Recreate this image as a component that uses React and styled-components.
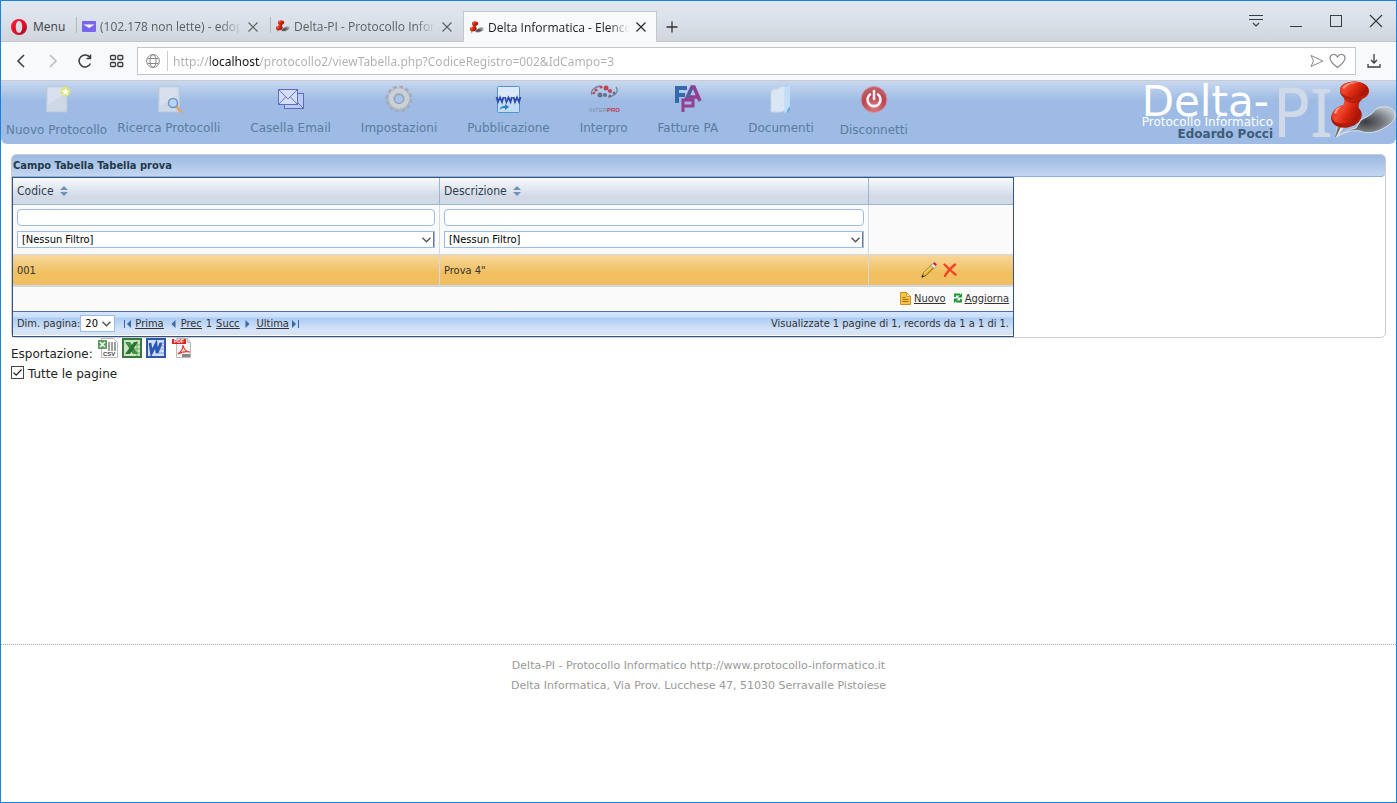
import { useState } from "react";
import styled, { createGlobalStyle, css } from "styled-components";

const verdana = `Verdana, "DejaVu Sans", sans-serif`;
const tahoma = `Tahoma, "DejaVu Sans Condensed", "DejaVu Sans", sans-serif`;
const segoe = `"Segoe UI", "Open Sans", sans-serif`;

const GlobalStyle = createGlobalStyle`
  * {
    box-sizing: border-box;
  }

  body {
    margin: 0;
    background: #fff;
    color: #333;
    font-family: ${verdana};
    font-size: 12px;
  }

  button {
    padding: 0;
    border: none;
    background: none;
    font: inherit;
    color: inherit;
    cursor: pointer;
  }

  svg {
    display: block;
    flex-shrink: 0;
  }
`;

const Window = styled.div`
  display: flex;
  flex-direction: column;
  min-height: 100vh;
  border: 1px solid #1a82d8;
`;

/* browser chrome */

const TabBar = styled.div`
  display: flex;
  height: 41px;
  padding-top: 10px;
  background: linear-gradient(#e1e7ef, #dbe2eb 40%, #d0d5dc);
  box-shadow: inset 0 -1px #c4c6c9;
  font-family: ${segoe};
  font-size: 12px;
  color: #5b5f63;
`;

const MenuButton = styled.button`
  display: flex;
  align-items: center;
  gap: 6px;
  width: 74px;
  padding-left: 10px;
  color: #3c4248;
`;

const Tab = styled.div`
  display: flex;
  align-items: center;
  gap: 4px;
  width: 194px;
  padding: 0 10px 0 6px;
  border: 1px solid transparent;
  background: linear-gradient(#b5b9be, #b5b9be) left 5px / 1px 16px no-repeat;

  ${(props) =>
    props.$active &&
    css`
      border-color: #c4c6c9;
      border-bottom: none;
      background: #f8f9fb;
      color: #222;
    `}
`;

const TabTitle = styled.span`
  flex: 1;
  overflow: hidden;
  white-space: nowrap;
  mask-image: linear-gradient(90deg, #000 84%, transparent 98%);
`;

const NewTab = styled.button`
  padding: 0 9px;
  color: #333;
`;

const WindowButtons = styled.div`
  display: flex;
  align-items: flex-start;
  gap: 24px;
  margin-left: auto;
  padding-right: 12px;
  color: #3a3d40;
`;

const AddressBar = styled.div`
  display: flex;
  align-items: center;
  gap: 16px;
  height: 39px;
  padding: 0 14px 0 12px;
  border-bottom: 1px solid #c9cbce;
  background: #f8f9fb;
  color: #3a3d40;
`;

const AddressField = styled.label`
  display: flex;
  align-items: center;
  flex: 1;
  gap: 4px;
  height: 28px;
  padding: 0 9px 0 8px;
  margin: 0 -6px 0 -4px;
  border: 1px solid #c4c6c9;
  background: #fff;
  color: #888;
`;

/* the host part of the address is darker than the rest */
const AddressInput = styled.input`
  flex: 1;
  height: 20px;
  margin-left: 3px;
  padding: 1px 0 0 5px;
  border: none;
  border-left: 1px solid #ccc;
  outline: none;
  font-family: "Noto Sans", sans-serif;
  font-size: 12px;
  color: #aeaeae;
  background: linear-gradient(90deg, #aeaeae 42px, #111 42px 92px, #aeaeae 92px);
  background-clip: text;
  -webkit-text-fill-color: transparent;
`;

/* application header */

const Header = styled.header`
  display: flex;
  justify-content: space-between;
  height: 63px;
  border-radius: 0 0 6px 6px;
  background: linear-gradient(#c8d8ef, #9dbbe4 20px);
`;

const Toolbar = styled.nav`
  display: flex;
  gap: 30px;
  padding: 4px 0 0 5px;
`;

const Tool = styled.a`
  display: flex;
  flex-direction: column;
  align-items: center;
  gap: ${(props) => (props.$low ? "9px" : "7px")};
  margin-right: -${(props) => props.$tight || 0}px;
  line-height: 16px;
  text-decoration: none;
  white-space: nowrap;
  color: #5c7b9e;
`;

const Brand = styled.div`
  display: flex;
`;

const BrandText = styled.div`
  display: flex;
  flex-direction: column;
  padding-top: 6px;
  line-height: 12px;
  color: #fff;
`;

const BrandName = styled.span`
  font-size: 42px;
  line-height: 29px;
`;

const UserName = styled.strong`
  text-align: right;
  color: #3f5c78;
`;

const BrandMark = styled.span`
  width: 58px;
  font-family: "DejaVu Sans Condensed", sans-serif;
  font-size: 68px;
  line-height: 60px;
  white-space: nowrap;
  color: #d0d9e8;
`;

const Serifed = styled.span`
  font-family: "Noto Sans", sans-serif;
`;

/* content */

const Main = styled.main`
  flex: 1;
  padding: 10px;
`;

const Panel = styled.section`
  border: 1px solid #ccc;
  border-radius: 5px;
`;

const PanelTitle = styled.h1`
  margin: 0;
  padding-left: 1px;
  border-bottom: 1px solid #8fb0dc;
  border-radius: 4px 4px 4px 0;
  background: linear-gradient(#9bb9e2, #c3d6f1);
  font-family: ${tahoma};
  font-size: 11px;
  line-height: 21px;
  color: #1f3a4a;
`;

const Grid = styled.table`
  width: 1002px;
  max-width: 100%;
  border: 1px solid #34547f;
  border-spacing: 0;
  table-layout: fixed;
  background: #fafafa;
  font-family: ${tahoma};
  font-size: 11px;
  color: #333;
`;

const Col = styled.col`
  width: ${(props) => props.$width}px;
`;

const HeadCell = styled.th`
  height: 27px;
  padding: 0 4px;
  border-bottom: 1px solid #9ab4d1;
  border-right: ${(props) => (props.$last ? "none" : "1px solid #9ab4d1")};
  background: linear-gradient(#f8fbfc, #d3dae7 70%);
  text-align: left;
  font-size: 12px;
  font-weight: normal;
  color: #2b3f4e;
`;

const SortButton = styled.button`
  display: flex;
  align-items: center;
  gap: 6px;
`;

const FilterCell = styled.td`
  height: 50px;
  padding: 0 4px 2px;
  border-bottom: 1px solid #d0d7e5;
  border-right: ${(props) => (props.$last ? "none" : "1px solid #d0d7e5")};
`;

const FilterInput = styled.input`
  display: block;
  width: 100%;
  height: 17px;
  margin-bottom: 5px;
  border: 1px solid #9dbbe4;
  border-radius: 4px;
  background: #fff;
  font: inherit;
`;

const SelectBox = styled.span`
  position: relative;
  display: block;
  flex: none;
  width: ${(props) => props.$width || "100%"};

  svg {
    position: absolute;
    top: 50%;
    right: 4px;
    transform: translateY(-50%);
    pointer-events: none;
    color: #555;
  }
`;

const Select = styled.select`
  display: block;
  appearance: none;
  width: 100%;
  height: 17px;
  padding: 0 4px;
  border: 1px solid #9dbbe4;
  border-radius: 0;
  box-shadow: ${(props) => (props.$plain ? "none" : "inset -1px 0 #777")};
  background: #fff;
  font: inherit;
  color: #000;
`;

const DataCell = styled.td`
  height: 32px;
  padding: 0 4px;
  border-bottom: 2px solid #d0d7e5;
  border-right: ${(props) => (props.$last ? "none" : "1px solid #d0d7e5")};
  background: linear-gradient(#f8d89e, #f0bf5f 60%);
`;

const RowActions = styled.div`
  display: flex;
  justify-content: center;
  gap: 6px;
  padding-right: 4px;
`;

const FootCell = styled.td`
  height: 24px;
  padding: 0 4px 2px;
`;

const GridActions = styled.div`
  display: flex;
  justify-content: flex-end;
  align-items: center;
  gap: 8px;
`;

const GridLink = styled.a`
  display: flex;
  align-items: center;
  gap: 3px;
  color: #333;
`;

const PagerCell = styled.td`
  height: 25px;
  padding: 0 4px;
  border-top: 1px solid #4a72a8;
  border-bottom: 1px solid #fff;
  background: linear-gradient(#d6e5fc, #cbdffb 5px, #acccf4 6px, #d6e4f7 18px);
`;

const Pager = styled.div`
  display: flex;
  align-items: center;
`;

const PagerLinks = styled.div`
  display: flex;
  align-items: center;
  gap: 4px;
  margin-left: 9px;

  svg {
    color: #3b69a8;
  }
`;

const PagerLink = styled.a`
  display: flex;
  align-items: center;
  gap: ${(props) => props.$gap || 2}px;
  margin-right: ${(props) => (props.$spaced ? "3px" : "0")};
  color: #333;

  span {
    text-decoration: underline;
  }
`;

const Records = styled.span`
  margin-left: auto;
`;

const ExportRow = styled.div`
  display: flex;
  align-items: flex-start;
  gap: 4px;
  height: 27px;
  color: #222;
`;

const ExportLabel = styled.span`
  margin-right: 1px;
  line-height: 32px;
`;

const AllPages = styled.label`
  display: flex;
  align-items: center;
  gap: 4px;
  line-height: 18px;
  color: #222;
`;

const Checkbox = styled.input`
  appearance: none;
  width: 13px;
  height: 13px;
  margin: 0 0 3px;
  border: 1px solid #444;
  background: #fff;

  &:checked {
    background: #fff
      url("data:image/svg+xml,%3Csvg xmlns='http://www.w3.org/2000/svg' viewBox='0 0 11 11' fill='none' stroke='%23222' stroke-width='1.2'%3E%3Cpath d='M1.5 5.5l2.7 2.7L9.5 2.5'/%3E%3C/svg%3E");
  }
`;

const Footer = styled.footer`
  padding: 11px 0 106px;
  border-top: 1px dotted #aaa;
  text-align: center;
  font-size: 11px;
  line-height: 20px;
  color: #999;

  p {
    margin: 0;
  }
`;

/* icons */

const CloseIcon = () => (
  <svg width="10" height="10" viewBox="0 0 10 10" stroke="currentColor" strokeWidth="1.1">
    <path d="M.5 .5l9 9M9.5 .5l-9 9" />
  </svg>
);

const ChevronIcon = () => (
  <svg width="9" height="6" viewBox="0 0 9 6" fill="none" stroke="currentColor" strokeWidth="1.4">
    <path d="M.5 .8l4 4 4-4" />
  </svg>
);

const OperaIcon = () => (
  <svg width="16" height="16" viewBox="0 0 16 16">
    <defs>
      <linearGradient id="opera" x1="0" y1="0" x2="1" y2="1">
        <stop offset="0" stopColor="#ff1b2d" />
        <stop offset=".6" stopColor="#e01028" />
        <stop offset="1" stopColor="#98001b" />
      </linearGradient>
    </defs>
    <path
      fill="url(#opera)"
      fillRule="evenodd"
      d="M8 0a8 8 0 1 0 0 16A8 8 0 0 0 8 0zm0 2.1c2 0 3.200 2.600 3.200 5.900S10 13.900 8 13.900 4.800 11.300 4.800 8 6 2.100 8 2.100z"
    />
  </svg>
);

const MailIcon = () => (
  <svg width="14" height="11" viewBox="0 0 14 11">
    <rect width="14" height="11" rx="1" fill="#7765f0" />
    <path d="M1.500 3.500h11L7 7z" fill="#fff" />
  </svg>
);

const PinIcon = ({ width = 14, height = 13 }) => (
  <svg width={width} height={height} viewBox="0 0 65 57">
    <defs>
      <linearGradient id="pinRed" x1="0" y1="0" x2="1" y2=".5">
        <stop offset="0" stopColor="#d62812" />
        <stop offset=".35" stopColor="#ee4a30" />
        <stop offset=".6" stopColor="#dd2a12" />
        <stop offset="1" stopColor="#a81405" />
      </linearGradient>
      <radialGradient id="pinShadow" cx=".5" cy=".5" r=".55">
        <stop offset="0" stopColor="#3c3d40" />
        <stop offset=".45" stopColor="#6a6d72" />
        <stop offset="1" stopColor="#bac1ca" />
      </radialGradient>
    </defs>
    <path
      d="M5 56c7-4 14-8 20-9l5-8c5-3 11-5 14-10 4-4 15-5 19 1 4 6-2 13-10 17-8 5-17 6-24 3-6-1-13 0-24 6z"
      fill="url(#pinShadow)"
      stroke="#dfe2e6"
      strokeWidth="1"
    />
    <path d="M6 45l7 1-7 10H4z" fill="#e9eaec" />
    <path d="M7 45L4 56h1l5-10" fill="#777" />
    <ellipse cx="15.500" cy="35.500" rx="15.500" ry="11" fill="#b01a08" transform="rotate(-12 15.500 35.500)" />
    <ellipse cx="15" cy="33" rx="14.500" ry="9.500" fill="url(#pinRed)" transform="rotate(-12 15 33)" />
    <path d="M12 13c3 6 1 10-2 16 3 5 13 6 18 0-1-5 0-8 4-14z" fill="url(#pinRed)" />
    <path d="M12 15c4 5 13 7 20 1l-1 3c-5 5-14 4-18-1z" fill="#981606" opacity=".6" />
    <ellipse cx="23.500" cy="10" rx="14.500" ry="9.500" fill="#bb1d0a" />
    <ellipse cx="23" cy="8.500" rx="14" ry="8" fill="url(#pinRed)" />
    <path d="M11 7c3-5 11-7 16-5-6 0-11 2-14 6z" fill="#ffc9b8" opacity=".6" />
    <path d="M3 32c1-4 4-6 7-6-3 2-4 4-5 7z" fill="#ffc9b8" opacity=".7" />
  </svg>
);

const NewDocIcon = () => (
  <svg width="28" height="28" viewBox="0 0 28 28">
    <path d="M3.500 1.500h20.500v25.500h-20.500z" fill="#ccd8e6" stroke="#b8c8da" />
    <path d="M5 2.500h14v8L5 20z" fill="#dbe4ee" opacity=".8" />
    <circle cx="22.500" cy="6.500" r="5" fill="#dfe672" opacity=".85" />
    <path d="M22.500 3l1 2.500 2.500.2-1.900 1.700.7 2.600-2.300-1.500-2.300 1.500.7-2.600-1.900-1.700 2.500-.2z" fill="#fff" />
  </svg>
);

const SearchDocIcon = () => (
  <svg width="28" height="28" viewBox="0 0 28 28">
    <path d="M3.500 1.500h21v25.500h-21z" fill="#ccd8e6" stroke="#b8c8da" />
    <path d="M5 2.500h17v8L5 21z" fill="#dbe4ee" opacity=".7" />
    <path d="M21 21l5 6" stroke="#d9a878" strokeWidth="3" strokeLinecap="round" />
    <circle cx="18" cy="18" r="4.500" fill="#b7d4f2" stroke="#6f95c4" strokeWidth="1.500" />
  </svg>
);

const EmailIcon = () => (
  <svg width="28" height="28" viewBox="0 0 28 28" stroke="#5f6cc0">
    <rect x="7.500" y="8.500" width="19" height="15" fill="#bccaf0" />
    <path d="M26 23l-5-5" strokeWidth=".9" />
    <rect x="1.500" y="4.500" width="19" height="15" fill="#d3ddf6" />
    <path d="M2 5l9 9 9-9M2 19l6.500-7M20 19l-6.500-7" fill="none" strokeWidth=".9" />
  </svg>
);

const GearIcon = () => (
  <svg width="28" height="28" viewBox="0 0 28 28">
    <circle cx="14" cy="14" r="12" fill="none" stroke="#a3acb6" strokeWidth="3" strokeDasharray="3.800 2.483" />
    <circle cx="14" cy="14" r="7.500" fill="none" stroke="#adb6bf" strokeWidth="7.500" />
    <circle cx="14" cy="13.500" r="8" fill="none" stroke="#ccd1d7" strokeWidth="4.500" />
    <circle cx="14" cy="14" r="4.500" fill="#a8c4e9" stroke="#8e9dae" />
  </svg>
);

const WwwIcon = () => (
  <svg width="28" height="28" viewBox="0 0 28 28">
    <rect x="3.500" y="1.500" width="22" height="26" rx="1" fill="#dbe9f8" stroke="#4f93cf" />
    <path d="M4 12h21v15H4z" fill="#c3dcf5" />
    <path
      d="M2.500 12l1.500 5 2-4.500 2 4.500 1.500-5M11 12l1.500 5 2-4.500 2 4.500 1.500-5M19.500 12l1.500 5 2-4.500 2 4.500 1.500-5"
      fill="none"
      stroke="#2d49ac"
      strokeWidth="1.800"
    />
    <path d="M6 25c0-3 2-4 5-4v-2l4 3-4 3v-2c-2 0-4 0-5 2z" fill="#2b7fc0" />
  </svg>
);

const InterproText = styled.text`
  font-family: "Liberation Sans", sans-serif;
  font-size: 6px;
`;

const InterproIcon = () => (
  <svg width="32" height="28" viewBox="-2 0 32 28">
    <path d="M2 10c-2-4 2-8 8-9M26 2c3 4 0 9-8 10" fill="none" stroke="#7c8493" strokeWidth="1.300" />
    <g fill="#bd4657">
      <circle cx="16" cy="3" r="2.500" />
      <circle cx="11" cy="2" r="1.500" />
      <circle cx="20" cy="6" r="2" />
      <circle cx="6" cy="5" r="1.600" />
      <circle cx="4" cy="8" r="1.300" />
    </g>
    <g fill="#66728a">
      <circle cx="10" cy="10" r="2.500" />
      <circle cx="15" cy="10" r="2" />
      <circle cx="20" cy="11" r="1.500" />
      <circle cx="24" cy="8" r="1.500" />
    </g>
    <InterproText x="-1" y="27" fill="#8391a8">
      INTER<tspan fill="#c03850" fontWeight="bold">PRO</tspan>
    </InterproText>
  </svg>
);

const FatturaIcon = () => (
  <svg width="28" height="28" viewBox="0 0 28 28" fill="none" strokeWidth="4">
    <path d="M3 18V3h10M3 10h8" stroke="#3669ab" />
    <path d="M9 27V15h10v6h-9" stroke="#953e91" strokeWidth="3" />
    <path d="M12 15l6-13h2l6 14M15 12h9" stroke="#953e91" strokeWidth="3.500" />
    <path d="M13 13l5-10" stroke="#3669ab" strokeWidth="2.500" />
  </svg>
);

const FolderIcon = () => (
  <svg width="28" height="28" viewBox="0 0 28 28">
    <path d="M12 1l11-1v24l-6 4z" fill="#a9d2f2" />
    <path d="M4 7l2-3h5l4-3 3 1v23l-4 2H4z" fill="#dae6f3" stroke="#c5d7e9" />
    <path d="M18 2l5-2v24l-5 4z" fill="#c1def6" />
    <path d="M20 25l3-4v4l-3 3z" fill="#68acdf" />
  </svg>
);

const PowerIcon = () => (
  <svg width="28" height="28" viewBox="0 0 28 28">
    <defs>
      <radialGradient id="power" cx=".5" cy=".8" r=".75">
        <stop offset="0" stopColor="#dd7a80" />
        <stop offset=".6" stopColor="#bb4550" />
        <stop offset="1" stopColor="#c0606a" />
      </radialGradient>
    </defs>
    <circle cx="14" cy="14.500" r="13" fill="url(#power)" stroke="#cf9aaa" />
    <path d="M10 9.500a6.500 6.500 0 1 0 8 0M14 6v8" fill="none" stroke="#f4f4fa" strokeWidth="2.600" strokeLinecap="round" />
  </svg>
);

const SortIcon = () => (
  <svg width="8" height="10" viewBox="0 0 8 10" fill="#6c93bd">
    <path d="M4 0l4 4H0zM4 10l4-4H0z" />
  </svg>
);

const PencilIcon = () => (
  <svg width="16" height="16" viewBox="0 0 16 16">
    <path d="M1 15l1.500-4L11 2.500l2.500 2.500L5 13.500z" fill="#e9b92e" stroke="#59430c" strokeWidth=".8" />
    <path d="M3 11.500L11.500 3" stroke="#fff2a8" />
    <path d="M10 3.500l2-2 3 3-2 2z" fill="#eee" stroke="#777" strokeWidth=".6" />
    <path d="M12.500 1.500l1-1 2 2-1 1z" fill="#d8213c" stroke="#d8213c" />
    <path d="M.5 15.500l.8-2.600 1.800 1.800z" fill="#111" />
  </svg>
);

const DeleteIcon = () => (
  <svg width="14" height="14" viewBox="0 0 14 14" stroke="#f04628" strokeWidth="2.400">
    <path d="M1.500 1.500c3 3 7 7 11 10M12 1.500C8 5 4 9 2 13" fill="none" strokeLinecap="round" />
  </svg>
);

const NoteIcon = () => (
  <svg width="11" height="13" viewBox="0 0 11 13">
    <path d="M.5 .5h6l4 4v8H.5z" fill="#f6c64a" stroke="#c8901d" />
    <path d="M6.500 .5v4h4z" fill="#fff0b9" stroke="#c8901d" strokeWidth=".8" />
    <path d="M2.500 5.500h3M2.500 7.500h6M2.500 9.500h6" stroke="#9c6c10" />
  </svg>
);

const RefreshIcon = () => (
  <svg width="8" height="10" viewBox="0 0 8 10" fill="none" stroke="#14962e" strokeWidth="1.800">
    <path d="M1 4V1.500h5M2 8.500h5V6" />
    <path d="M8 0v4.500H3.500zM0 10V5.500h4.500z" fill="#14962e" stroke="none" />
  </svg>
);

const FirstIcon = () => (
  <svg width="8" height="8" viewBox="0 0 8 8" fill="currentColor">
    <path d="M0 0h1v8H0zM7 0v8L3 4z" />
  </svg>
);

const PrevIcon = () => (
  <svg width="5" height="8" viewBox="0 0 5 8" fill="currentColor">
    <path d="M4.500 0v8L.5 4z" />
  </svg>
);

const NextIcon = () => (
  <svg width="5" height="8" viewBox="0 0 5 8" fill="currentColor">
    <path d="M.5 0v8l4-4z" />
  </svg>
);

const LastIcon = () => (
  <svg width="8" height="8" viewBox="0 0 8 8" fill="currentColor">
    <path d="M1 0v8l4-4zM7 0h1v8H7z" />
  </svg>
);

const CsvText = styled.text`
  font-family: "Liberation Sans", sans-serif;
  font-size: 6px;
  font-weight: bold;
`;

const CsvIcon = () => (
  <svg width="20" height="20" viewBox="0 0 20 20">
    <path d="M3.500 .5h12l4 4v15h-16z" fill="#fff" stroke="#bbb" />
    <path d="M11 4v9M14 4v9M17 4v9" stroke="#777" strokeWidth="1.400" />
    <rect y="2" width="9" height="9" fill="#5e9d61" />
    <path d="M2 4l5 5M7 4L2 9" stroke="#fff" strokeWidth="1.500" />
    <path d="M4 13h15v6H4z" fill="#fff" />
    <CsvText x="5" y="18" fill="#444">
      CSV
    </CsvText>
  </svg>
);

const ExcelIcon = () => (
  <svg width="20" height="20" viewBox="0 0 20 20">
    <rect x="1" y="1" width="18" height="18" fill="#cfe5c8" stroke="#387b39" strokeWidth="2" />
    <path d="M12 7h6M12 11h6M12 15h6M15 3v15" stroke="#6faa68" />
    <path d="M3 4h5l8 12h-5z" fill="#3f9142" />
    <path d="M12 4h4L8 16H3z" fill="#2b7330" />
  </svg>
);

const WordIcon = () => (
  <svg width="20" height="20" viewBox="0 0 20 20">
    <rect x="1" y="1" width="18" height="18" fill="#cfdcf6" stroke="#3156a5" strokeWidth="2" />
    <path d="M14 5h4M14 8h4M14 11h4M13 15h5" stroke="#7f9bd5" />
    <path d="M4 5l1.500 10L10 6l1 9 4-10" fill="none" stroke="#2b57b4" strokeWidth="2.800" />
  </svg>
);

const PdfText = styled(CsvText)`
  font-size: 5px;
`;

const PdfIcon = () => (
  <svg width="22" height="20" viewBox="-2 0 22 20">
    <path d="M4.500 .5h11l3 4v15h-14z" fill="#f3f3f3" stroke="#bbb" />
    <path d="M15.500 .5v4h3" fill="#ddd" stroke="#bbb" />
    <path d="M0 1h14v5H0z" fill="#df2020" />
    <path d="M6 16c3-2 5-6 5-9 1 5 3 7 7 7-4-1-8 0-12 2z" fill="none" stroke="#df3a30" strokeWidth="1.200" />
    <path d="M10 16h8v3h-8z" fill="#888" />
    <PdfText x="2" y="5" fill="#fff">
      PDF
    </PdfText>
  </svg>
);

const tabs = [
  { title: "(102.178 non lette) - edopocci", icon: <MailIcon /> },
  { title: "Delta-PI - Protocollo Informatico", icon: <PinIcon /> },
  { title: "Delta Informatica - Elenco Tabelle", icon: <PinIcon />, active: true },
];

const tools = [
  { label: "Nuovo Protocollo", icon: <NewDocIcon />, low: true, tight: 20 },
  { label: "Ricerca Protocolli", icon: <SearchDocIcon /> },
  { label: "Casella Email", icon: <EmailIcon /> },
  { label: "Impostazioni", icon: <GearIcon /> },
  { label: "Pubblicazione", icon: <WwwIcon /> },
  { label: "Interpro", icon: <InterproIcon /> },
  { label: "Fatture PA", icon: <FatturaIcon /> },
  { label: "Documenti", icon: <FolderIcon />, tight: 4 },
  { label: "Disconnetti", icon: <PowerIcon />, low: true },
];

const columns = ["Codice", "Descrizione"];

const Browser = () => (
  <>
    <TabBar>
      <MenuButton>
        <OperaIcon />
        Menu
      </MenuButton>
      {tabs.map((tab) => (
        <Tab key={tab.title} $active={tab.active}>
          {tab.icon}
          <TabTitle>{tab.title}</TabTitle>
          <button aria-label="Chiudi scheda">
            <CloseIcon />
          </button>
        </Tab>
      ))}
      <NewTab aria-label="Nuova scheda">
        <svg width="12" height="12" viewBox="0 0 12 12" stroke="currentColor" strokeWidth="1.300">
          <path d="M6 .5v11M.5 6h11" />
        </svg>
      </NewTab>
      <WindowButtons>
        <button aria-label="Schede">
          <svg width="16" height="20" viewBox="0 0 16 20" fill="none" stroke="currentColor" strokeWidth="1.200">
            <path d="M1 4.500h14M1 8.500h14M5 12l3 3 3-3" />
          </svg>
        </button>
        <button aria-label="Riduci">
          <svg width="16" height="20" viewBox="0 0 16 20" stroke="currentColor">
            <path d="M2 15.500h12" />
          </svg>
        </button>
        <button aria-label="Ingrandisci">
          <svg width="16" height="20" viewBox="0 0 16 20" fill="none" stroke="currentColor">
            <rect x="2.500" y="4.500" width="11" height="11" />
          </svg>
        </button>
        <button aria-label="Chiudi">
          <svg width="16" height="20" viewBox="0 0 16 20" stroke="currentColor" strokeWidth="1.200">
            <path d="M2 4l12 12M14 4L2 16" />
          </svg>
        </button>
      </WindowButtons>
    </TabBar>
    <AddressBar>
      <button aria-label="Indietro">
        <svg width="16" height="16" viewBox="0 0 16 16" fill="none" stroke="currentColor" strokeWidth="1.500">
          <path d="M11 2L5 8l6 6" />
        </svg>
      </button>
      <button aria-label="Avanti">
        <svg width="16" height="16" viewBox="0 0 16 16" fill="none" stroke="#b9bcc0" strokeWidth="1.500">
          <path d="M5 2l6 6-6 6" />
        </svg>
      </button>
      <button aria-label="Ricarica">
        <svg width="16" height="16" viewBox="0 0 16 16" fill="none" stroke="currentColor" strokeWidth="1.500">
          <path d="M13.500 10.500A6 6 0 1 1 13 4.500M13.500 1.500v4h-4" />
        </svg>
      </button>
      <button aria-label="Accesso rapido">
        <svg width="16" height="16" viewBox="0 0 16 16" fill="none" stroke="currentColor" strokeWidth="1.300">
          <rect x="1.500" y="2.500" width="5" height="4" rx="1" />
          <rect x="8.800" y="2.500" width="5" height="4" rx="1" />
          <rect x="1.500" y="9.500" width="5" height="4" rx="1" />
          <rect x="8.800" y="9.500" width="5" height="4" rx="1" />
        </svg>
      </button>
      <AddressField>
        <svg width="14" height="14" viewBox="0 0 14 14" fill="none" stroke="currentColor">
          <circle cx="7" cy="7" r="6.400" />
          <ellipse cx="7" cy="7" rx="3" ry="6.400" />
          <path d="M1.500 4.500h11M1.500 9.500h11" />
        </svg>
        <AddressInput
          aria-label="Indirizzo"
          defaultValue="http://localhost/protocollo2/viewTabella.php?CodiceRegistro=002&IdCampo=3"
        />
        <svg width="16" height="14" viewBox="0 0 16 14" fill="none" stroke="currentColor">
          <path d="M2 1.500l12 5.500-12 5.500L4.500 7z" />
        </svg>
        <svg width="17" height="16" viewBox="0 0 17 16" fill="none" stroke="currentColor" strokeWidth="1.200">
          <path d="M8.500 14.500C4 11 1 8.500 1 5.200 1 1 6.500 0 8.500 4 10.500 0 16 1 16 5.200c0 3.300-3 5.800-7.500 9.300z" />
        </svg>
      </AddressField>
      <button aria-label="Download">
        <svg width="16" height="16" viewBox="0 0 16 16" fill="none" stroke="currentColor" strokeWidth="1.300">
          <path d="M8 1v8.500M5 7l3 3 3-3M2 11v3h12v-3" />
        </svg>
      </button>
    </AddressBar>
  </>
);

const App = () => {
  const [allPages, setAllPages] = useState(true);

  return (
    <Window>
      <GlobalStyle />
      <Browser />

      <Header>
        <Toolbar>
          {tools.map((tool) => (
            <Tool key={tool.label} href="#" $low={tool.low} $tight={tool.tight}>
              {tool.icon}
              {tool.label}
            </Tool>
          ))}
        </Toolbar>
        <Brand>
          <BrandText>
            <BrandName>Delta-</BrandName>
            <span>Protocollo Informatico</span>
            <UserName>Edoardo Pocci</UserName>
          </BrandText>
          <BrandMark>
            P<Serifed>I</Serifed>
          </BrandMark>
          <PinIcon width={65} height={57} />
        </Brand>
      </Header>

      <Main>
        <Panel>
          <PanelTitle>Campo Tabella Tabella prova</PanelTitle>
          <Grid>
            <colgroup>
              <Col $width={427} />
              <Col $width={429} />
              <col />
            </colgroup>
            <thead>
              <tr>
                {columns.map((column) => (
                  <HeadCell key={column}>
                    <SortButton>
                      {column}
                      <SortIcon />
                    </SortButton>
                  </HeadCell>
                ))}
                <HeadCell $last />
              </tr>
            </thead>
            <tbody>
              <tr>
                {columns.map((column) => (
                  <FilterCell key={column}>
                    <FilterInput aria-label={column} />
                    <SelectBox>
                      <Select aria-label={`Filtro ${column}`}>
                        <option>[Nessun Filtro]</option>
                      </Select>
                      <ChevronIcon />
                    </SelectBox>
                  </FilterCell>
                ))}
                <FilterCell $last />
              </tr>
              <tr>
                <DataCell>001</DataCell>
                <DataCell>Prova 4"</DataCell>
                <DataCell $last>
                  <RowActions>
                    <button aria-label="Modifica">
                      <PencilIcon />
                    </button>
                    <button aria-label="Elimina">
                      <DeleteIcon />
                    </button>
                  </RowActions>
                </DataCell>
              </tr>
            </tbody>
            <tfoot>
              <tr>
                <FootCell colSpan={3}>
                  <GridActions>
                    <GridLink href="#">
                      <NoteIcon />
                      Nuovo
                    </GridLink>
                    <GridLink href="#">
                      <RefreshIcon />
                      Aggiorna
                    </GridLink>
                  </GridActions>
                </FootCell>
              </tr>
              <tr>
                <PagerCell colSpan={3}>
                  <Pager>
                    <label htmlFor="pageSize">Dim. pagina:</label>
                    <SelectBox $width="35px">
                      <Select id="pageSize" $plain>
                        <option>20</option>
                      </Select>
                      <ChevronIcon />
                    </SelectBox>
                    <PagerLinks>
                      <PagerLink href="#" $gap={3} $spaced>
                        <FirstIcon />
                        <span>Prima</span>
                      </PagerLink>
                      <PagerLink href="#" $gap={5}>
                        <PrevIcon />
                        <span>Prec</span>
                      </PagerLink>
                      1
                      <PagerLink href="#" $gap={5} $spaced>
                        <span>Succ</span>
                        <NextIcon />
                      </PagerLink>
                      <PagerLink href="#">
                        <span>Ultima</span>
                        <LastIcon />
                      </PagerLink>
                    </PagerLinks>
                    <Records>Visualizzate 1 pagine di 1, records da 1 a 1 di 1.</Records>
                  </Pager>
                </PagerCell>
              </tr>
            </tfoot>
          </Grid>
        </Panel>

        <ExportRow>
          <ExportLabel>Esportazione:</ExportLabel>
          <button aria-label="CSV">
            <CsvIcon />
          </button>
          <button aria-label="Excel">
            <ExcelIcon />
          </button>
          <button aria-label="Word">
            <WordIcon />
          </button>
          <button aria-label="PDF">
            <PdfIcon />
          </button>
        </ExportRow>
        <AllPages>
          <Checkbox type="checkbox" checked={allPages} onChange={(e) => setAllPages(e.target.checked)} />
          Tutte le pagine
        </AllPages>
      </Main>

      <Footer>
        <p>Delta-PI - Protocollo Informatico http://www.protocollo-informatico.it</p>
        <p>Delta Informatica, Via Prov. Lucchese 47, 51030 Serravalle Pistoiese</p>
      </Footer>
    </Window>
  );
};

export default App;
